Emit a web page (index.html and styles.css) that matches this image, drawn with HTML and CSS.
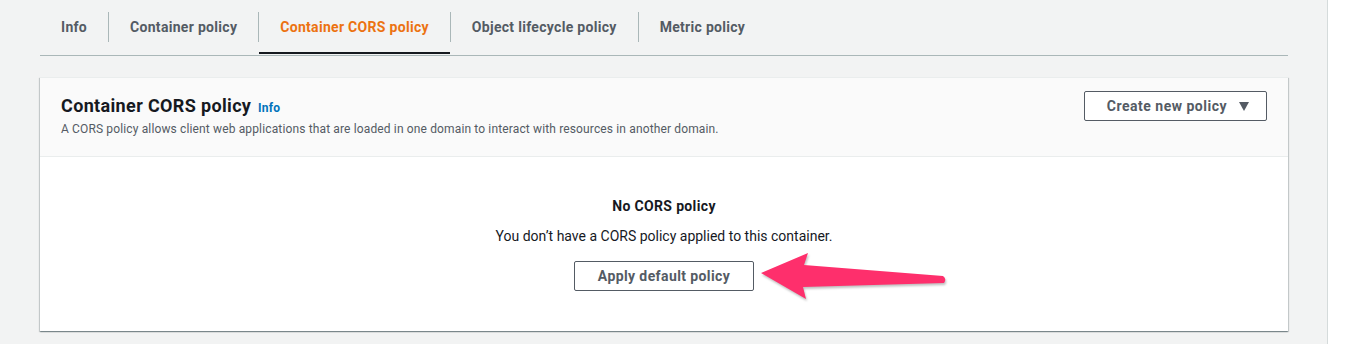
FILE: index.html
```html
<!DOCTYPE html>
<html lang="en">
  <head>
    <meta charset="UTF-8" />
    <meta name="viewport" content="width=device-width, initial-scale=1.0" />
    <title>Container CORS policy</title>
    <link rel="stylesheet" href="styles.css">
  </head>
  <body>
    <div class="page">
      <!-- Tabs -->
      <div class="tabs">
        <div class="tab"><span class="tab-label">Info</span></div>
        <div class="tab"><span class="tab-label">Container policy</span></div>
        <div class="tab active"><span class="tab-label">Container CORS policy</span></div>
        <div class="tab"><span class="tab-label">Object lifecycle policy</span></div>
        <div class="tab"><span class="tab-label">Metric policy</span></div>
      </div>

      <!-- CORS policy card -->
      <div class="card">
        <div class="card-header">
          <div class="card-title-block">
            <h2 class="card-title">Container CORS policy <a class="info-link" href="#">Info</a></h2>
            <p class="card-desc">A CORS policy allows client web applications that are loaded in one domain to interact with resources in another domain.</p>
          </div>
          <button class="button dropdown">Create new policy <span class="caret"></span></button>
        </div>
        <div class="card-body">
          <div class="empty-title">No CORS policy</div>
          <div class="empty-text">You don’t have a CORS policy applied to this container.</div>
          <div class="empty-action">
            <button class="button">Apply default policy</button>
            <!-- annotation arrow -->
            <svg class="arrow" width="196" height="52" viewBox="0 0 196 52">
              <path d="M3 21 L50 1 L46 13 L185 24 Q189 27 186 31 L45 35 L48 47 Z" fill="#fe2f6c" />
            </svg>
          </div>
        </div>
      </div>
    </div>
    <div class="side"></div>
  </body>
</html>
```

FILE: styles.css
```css
/* AWS console look */
body {
  font-family: Roboto, "Liberation Sans", Arial, sans-serif;
  margin: 0;
  background-color: #f2f3f3;
  color: #16191f;
  display: flex;
  min-height: 344px;
}
.page {
  width: 1248px;
  padding: 0 39px 0 40px;
  border-right: 1px solid #d5dbdb;
}
.side {
  flex: 1;
  background-color: #fff;
}
.tabs {
  display: flex;
  height: 55px;
  border-bottom: 1px solid #aab7b8;
}
.tab {
  position: relative;
  display: flex;
  align-items: center;
  font-size: 14px;
  font-weight: bold;
  letter-spacing: 0.3px;
  color: #545b64;
  padding-bottom: 1px;
}
.tab-label {
  padding: 0 21px 0 21px;
  line-height: 30px;
  border-right: 1px solid #aab7b8;
}
.tab:last-child .tab-label {
  border-right: none;
}
.tab.active {
  color: #ec7211;
}
.tab.active::after {
  content: "";
  position: absolute;
  left: 0;
  right: 1px;
  bottom: 1px;
  height: 2px;
  background-color: #16191f;
}
.card {
  margin-top: 21px;
  background-color: #fff;
  border-top: 1px solid #eaeded;
  box-shadow: 0 1px 1px 0 rgba(0, 28, 36, 0.3), 1px 1px 1px 0 rgba(0, 28, 36, 0.15), -1px 1px 1px 0 rgba(0, 28, 36, 0.15);
}
.card-header {
  display: flex;
  justify-content: space-between;
  align-items: flex-start;
  background-color: #fafafa;
  border-bottom: 1px solid #eaeded;
  padding: 17px 21px 19px 21px;
}
.card-title {
  margin: 0;
  font-size: 18px;
  line-height: 22px;
  font-weight: bold;
  letter-spacing: 0.35px;
}
.info-link {
  font-size: 12px;
  color: #0073bb;
  text-decoration: none;
  margin-left: 2px;
  letter-spacing: 0.2px;
}
.card-desc {
  margin: 2px 0 0 0;
  font-size: 12px;
  line-height: 16px;
  color: #545b64;
  letter-spacing: 0.14px;
}
.button {
  font-family: inherit;
  font-size: 14px;
  font-weight: bold;
  letter-spacing: 0.4px;
  color: #545b64;
  background-color: #fff;
  border: 1px solid #545b64;
  border-radius: 2px;
  height: 30px;
  padding: 0 20px;
  cursor: pointer;
}
.dropdown {
  margin-top: -4px;
  display: flex;
  align-items: center;
  padding: 0 17px 0 22px;
  letter-spacing: 0.5px;
}
.caret {
  display: inline-block;
  margin-left: 12px;
  width: 0;
  height: 0;
  border-left: 5.5px solid transparent;
  border-right: 5.5px solid transparent;
  border-top: 9px solid #545b64;
}
.card-body {
  padding: 39px 20px 40px 20px;
  text-align: center;
}
.empty-title {
  font-size: 14px;
  font-weight: bold;
  line-height: 20px;
  letter-spacing: 0.35px;
}
.empty-text {
  margin-top: 10px;
  font-size: 14px;
  line-height: 20px;
}
.empty-action {
  position: relative;
  margin-top: 15px;
  display: inline-block;
}
.empty-action .button {
  display: block;
  width: 180px;
}
.arrow {
  position: absolute;
  left: 184px;
  top: -9px;
  filter: drop-shadow(1px 2px 1px rgba(0, 0, 0, 0.25));
}
```
